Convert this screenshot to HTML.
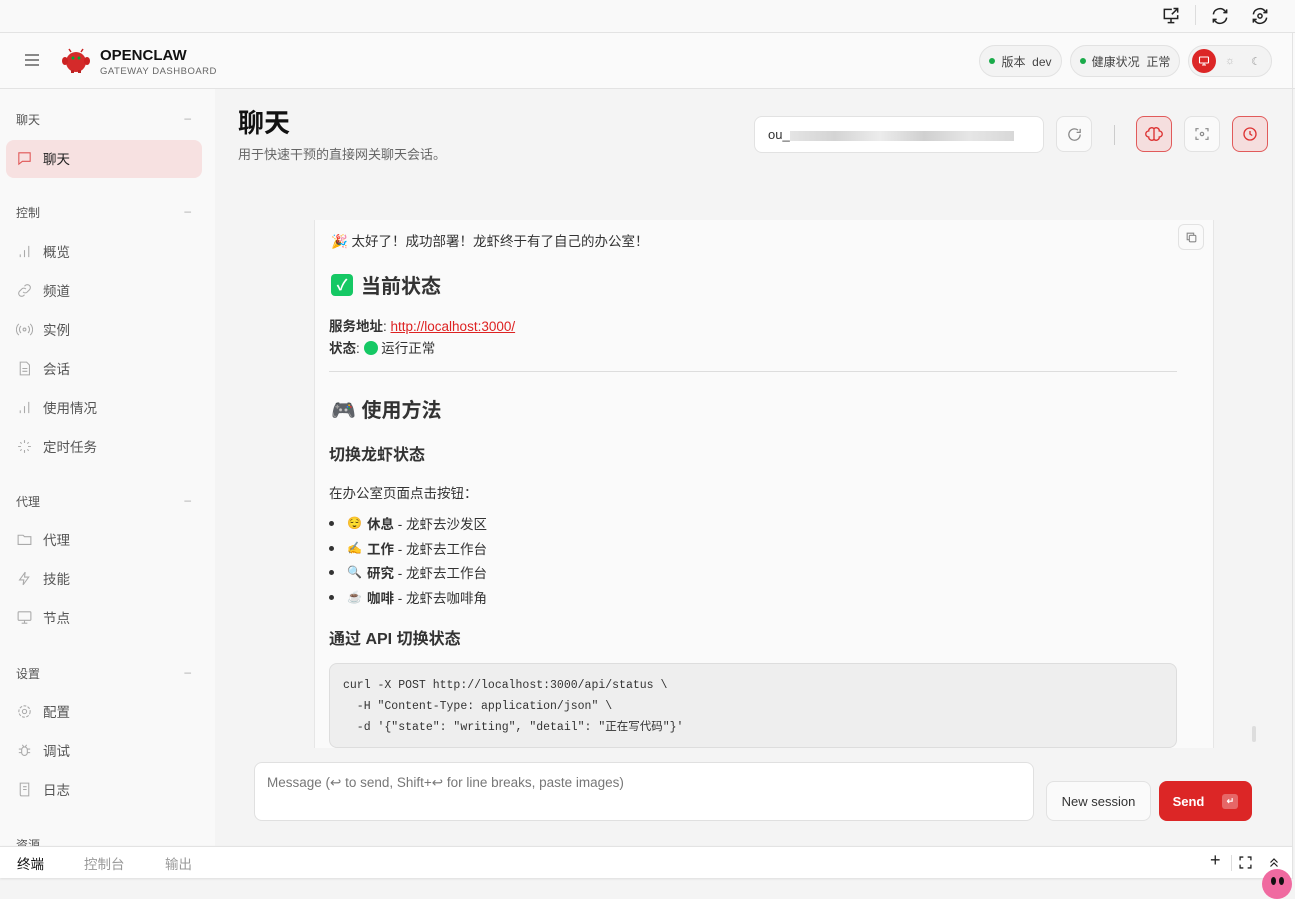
<!DOCTYPE html>
<html><head><meta charset="utf-8"><style>
*{box-sizing:border-box;margin:0;padding:0}
body{width:1295px;height:889px;overflow:hidden;background:#f4f4f4;font-family:"Liberation Sans","Noto Sans CJK SC",sans-serif;color:#333;position:relative}
.abs{position:absolute}
.top{left:0;top:0;width:1295px;height:33px;background:#f9f9f9;border-bottom:1px solid #e3e3e3}
.hdr{left:0;top:33px;width:1295px;height:56px;background:#fafafa;border-bottom:1px solid #e3e3e3}
.side{left:0;top:89px;width:215px;height:757px;background:#f9f9f9;overflow:hidden}
.sec{position:absolute;left:16px;font-size:12px;color:#555;width:175px}
.sec span{position:absolute;right:0;color:#aaa}
.item{position:absolute;left:16px;font-size:13.5px;color:#555;display:flex;align-items:center;gap:10px}
.item svg{width:17px;height:17px;stroke:#aaa;fill:none;stroke-width:1.5}
.pill{position:absolute;top:45px;height:32px;border:1px solid #e2e2e2;border-radius:16px;background:#f3f3f3;font-size:12px;color:#444;display:flex;align-items:center;justify-content:center;padding:0;gap:6px;white-space:nowrap}
.dot{width:6px;height:6px;border-radius:50%;background:#1aab4a;flex:none}
.btn{position:absolute;width:36px;height:36px;border:1px solid #e2e2e2;border-radius:8px;background:#fafafa;display:flex;align-items:center;justify-content:center}
.btn.red{background:#f5dede;border-color:#e15a5a}
.card{left:314px;top:220px;width:900px;height:528px;background:#fafafa;border-left:1px solid #e6e6e6;border-right:1px solid #e6e6e6;overflow:hidden;font-size:13.5px;color:#333}
.card b{color:#333}
.li{position:absolute;left:14px;display:flex;align-items:center;font-size:13.5px}
.li:before{content:"";width:5px;height:5px;border-radius:50%;background:#333;margin-right:13px}
.li i{font-style:normal;font-size:12px;width:20px}
.code{position:absolute;left:14px;top:443px;width:848px;height:85px;border:1px solid #ddd;border-radius:8px;background:#eeeeee;font-family:"Liberation Mono","Noto Sans CJK SC",monospace;font-size:11.5px;line-height:21px;padding:11px 13px;white-space:pre;color:#333}
</style></head><body>
<div class="abs top">
 <svg class="abs" style="left:1161px;top:6px" width="20" height="20" viewBox="0 0 24 24" fill="none" stroke="#222" stroke-width="1.8"><path d="M13 4H4v11h16v-4M8 20h8M12 15v5M15 3h5v5M20 3l-7 7"/></svg>
 <div class="abs" style="left:1195px;top:5px;width:1px;height:20px;background:#ddd"></div>
 <svg class="abs" style="left:1210px;top:6px" width="20" height="20" viewBox="0 0 24 24" fill="none" stroke="#222" stroke-width="1.8"><path d="M4 10a8 8 0 0 1 14-4l2 2M20 4v4h-4M20 14a8 8 0 0 1-14 4l-2-2M4 20v-4h4"/></svg>
 <svg class="abs" style="left:1250px;top:6px" width="20" height="20" viewBox="0 0 24 24" fill="none" stroke="#222" stroke-width="1.8"><path d="M4 10a8 8 0 0 1 14-4l2 2M20 4v4h-4M20 14a8 8 0 0 1-14 4l-2-2M4 20v-4h4"/><circle cx="12" cy="12" r="2.5"/></svg>
</div>
<div class="abs hdr">
 <div class="abs" style="left:25px;top:21px;width:14px;height:2px;background:#888;box-shadow:0 5px 0 #888,0 10px 0 #888"></div>
 <svg class="abs" style="left:61px;top:12px" width="30" height="30" viewBox="0 0 30 30"><ellipse cx="15" cy="17" rx="10" ry="10" fill="#d42a2a"/><ellipse cx="4" cy="16" rx="3" ry="4" fill="#c22"/><ellipse cx="26" cy="16" rx="3" ry="4" fill="#c22"/><path d="M10 7l-2-3M20 7l2-3" stroke="#c22" stroke-width="1.5"/><circle cx="12" cy="13" r="1.5" fill="#0a3"/><circle cx="18" cy="13" r="1.5" fill="#0a3"/><rect x="10" y="25" width="3" height="3" fill="#b22"/><rect x="17" y="25" width="3" height="3" fill="#b22"/></svg>
 <div class="abs" style="left:100px;top:14px;font-size:15px;font-weight:bold;color:#111">OPENCLAW</div>
 <div class="abs" style="left:100px;top:33px;font-size:9.5px;color:#666;letter-spacing:.5px">GATEWAY DASHBOARD</div>
 <div class="pill" style="left:979px;top:12px;width:83px"><i class="dot"></i><span>版本&nbsp; dev</span></div>
 <div class="pill" style="left:1070px;top:12px;width:110px"><i class="dot"></i><span>健康状况&nbsp; 正常</span></div>
 <div class="pill" style="left:1188px;top:12px;width:84px;padding:0 3px;gap:0;justify-content:flex-start">
  <div style="width:24px;height:24px;border-radius:50%;background:#dc2626;display:flex;align-items:center;justify-content:center"><svg width="12" height="12" viewBox="0 0 24 24" fill="none" stroke="#fff" stroke-width="2.2"><rect x="3" y="4" width="18" height="12" rx="1"/><path d="M8 20h8M12 16v4"/></svg></div>
  <div style="width:28px;text-align:center;color:#bbb;font-size:11px">☼</div>
  <div style="width:24px;text-align:center;color:#999;font-size:11px">☾</div>
 </div>
</div>
<div class="abs side">
 <div class="sec" style="top:22px">聊天<span>–</span></div>
 <div class="abs" style="left:6px;top:51px;width:196px;height:38px;background:#f7e1e1;border-radius:8px"></div>
 <div class="item" style="top:59px;color:#222"><svg viewBox="0 0 24 24" style="stroke:#e05555"><path d="M4 4h16v12H9l-5 4z"/></svg>聊天</div>
 <div class="sec" style="top:115px">控制<span>–</span></div>
 <div class="item" style="top:152px"><svg viewBox="0 0 24 24"><path d="M6 20v-4M12 20V10M18 20V4"/></svg>概览</div>
 <div class="item" style="top:191px"><svg viewBox="0 0 24 24"><path d="M10 14a4 4 0 0 0 6 0l3-3a4 4 0 0 0-6-6l-1 1M14 10a4 4 0 0 0-6 0l-3 3a4 4 0 0 0 6 6l1-1"/></svg>频道</div>
 <div class="item" style="top:230px"><svg viewBox="0 0 24 24"><circle cx="12" cy="12" r="2"/><path d="M7 7a7 7 0 0 0 0 10M17 7a7 7 0 0 1 0 10M4 4a11 11 0 0 0 0 16M20 4a11 11 0 0 1 0 16"/></svg>实例</div>
 <div class="item" style="top:269px"><svg viewBox="0 0 24 24"><path d="M6 3h9l4 4v14H6zM9 12h7M9 16h7"/></svg>会话</div>
 <div class="item" style="top:308px"><svg viewBox="0 0 24 24"><path d="M6 20v-4M12 20V10M18 20V4"/></svg>使用情况</div>
 <div class="item" style="top:347px"><svg viewBox="0 0 24 24"><path d="M12 3v4M12 17v4M3 12h4M17 12h4M6 6l2 2M16 16l2 2M6 18l2-2M16 8l2-2"/></svg>定时任务</div>
 <div class="sec" style="top:404px">代理<span>–</span></div>
 <div class="item" style="top:440px"><svg viewBox="0 0 24 24"><path d="M3 6h7l2 2h9v11H3z"/></svg>代理</div>
 <div class="item" style="top:479px"><svg viewBox="0 0 24 24"><path d="M13 3L5 14h6l-1 7 8-11h-6z"/></svg>技能</div>
 <div class="item" style="top:518px"><svg viewBox="0 0 24 24"><rect x="3" y="4" width="18" height="12" rx="1"/><path d="M8 20h8M12 16v4"/></svg>节点</div>
 <div class="sec" style="top:576px">设置<span>–</span></div>
 <div class="item" style="top:612px"><svg viewBox="0 0 24 24"><circle cx="12" cy="12" r="3"/><circle cx="12" cy="12" r="8" stroke-dasharray="4 2"/></svg>配置</div>
 <div class="item" style="top:651px"><svg viewBox="0 0 24 24"><rect x="8" y="7" width="8" height="12" rx="4"/><path d="M4 10h4M16 10h4M4 15h4M16 15h4M9 4l2 3M15 4l-2 3"/></svg>调试</div>
 <div class="item" style="top:690px"><svg viewBox="0 0 24 24"><path d="M6 3h12v18H8a2 2 0 0 1-2-2zM10 8h5M10 12h5"/></svg>日志</div>
 <div class="sec" style="top:747px">资源</div>
</div>
<div class="abs" style="left:238px;top:103px;font-size:26px;font-weight:bold;color:#111">聊天</div>
<div class="abs" style="left:238px;top:144px;font-size:13px;color:#666">用于快速干预的直接网关聊天会话。</div>
<div class="abs" style="left:754px;top:116px;width:290px;height:37px;border:1px solid #e2e2e2;border-radius:8px;background:#fff;padding:10px 13px;font-size:13px;color:#333">ou_<span style="display:inline-block;width:224px;height:10px;background:linear-gradient(90deg,#e4e4e4,#d4d4d4,#ececec,#d0d0d0,#e6e6e6,#d8d8d8);vertical-align:middle"></span></div>
<div class="btn" style="left:1056px;top:116px"><svg width="17" height="17" viewBox="0 0 24 24" fill="none" stroke="#888" stroke-width="1.8"><path d="M20 12a8 8 0 1 1-3-6.2M20 4v5h-5"/></svg></div>
<div class="abs" style="left:1114px;top:125px;width:1px;height:20px;background:#ccc"></div>
<div class="btn red" style="left:1136px;top:116px"><svg width="18" height="18" viewBox="0 0 24 24" fill="none" stroke="#d33" stroke-width="1.8"><path d="M12 4v16M12 5a4 4 0 0 0-7 3 4 4 0 0 0 0 8 4 4 0 0 0 7 3M12 5a4 4 0 0 1 7 3 4 4 0 0 1 0 8 4 4 0 0 1-7 3"/></svg></div>
<div class="btn" style="left:1184px;top:116px"><svg width="16" height="16" viewBox="0 0 24 24" fill="none" stroke="#888" stroke-width="1.8"><path d="M3 8V4h4M17 4h4v4M21 16v4h-4M7 20H3v-4"/><circle cx="12" cy="12" r="2.5"/></svg></div>
<div class="btn red" style="left:1232px;top:116px"><svg width="18" height="18" viewBox="0 0 24 24" fill="none" stroke="#d33" stroke-width="1.8"><circle cx="12" cy="12" r="8"/><path d="M12 8v4l3 2"/></svg></div>
<div class="abs card">
 <div class="abs" style="left:863px;top:4px;width:26px;height:26px;border:1px solid #e2e2e2;border-radius:6px;display:flex;align-items:center;justify-content:center"><svg width="13" height="13" viewBox="0 0 24 24" fill="none" stroke="#888" stroke-width="2"><rect x="8" y="8" width="12" height="12" rx="2"/><path d="M16 8V4H4v12h4"/></svg></div>
 <div class="abs" style="left:16px;top:10px">🎉 太好了！成功部署！龙虾终于有了自己的办公室！</div>
 <div class="abs" style="left:16px;top:50px;font-size:20px;font-weight:bold;display:flex;align-items:center;gap:8px"><span style="width:22px;height:22px;background:#15c864;border-radius:4px;color:#fff;font-size:15px;display:flex;align-items:center;justify-content:center">✓</span>当前状态</div>
 <div class="abs" style="left:14px;top:96px;line-height:22px"><b>服务地址</b>: <span style="color:#d22;text-decoration:underline">http://localhost:3000/</span><br><b>状态</b>: <span style="display:inline-block;width:14px;height:14px;border-radius:50%;background:#15c864;vertical-align:-2px"></span> 运行正常</div>
 <div class="abs" style="left:14px;top:151px;width:848px;height:1px;background:#ddd"></div>
 <div class="abs" style="left:16px;top:174px;font-size:20px;font-weight:bold">🎮 使用方法</div>
 <div class="abs" style="left:14px;top:221px;font-size:16px;font-weight:bold">切换龙虾状态</div>
 <div class="abs" style="left:14px;top:262px">在办公室页面点击按钮：</div>
 <div class="li" style="top:293px"><i>😌</i><b>休息</b>&nbsp;- 龙虾去沙发区</div>
 <div class="li" style="top:318px"><i>✍️</i><b>工作</b>&nbsp;- 龙虾去工作台</div>
 <div class="li" style="top:342px"><i>🔍</i><b>研究</b>&nbsp;- 龙虾去工作台</div>
 <div class="li" style="top:367px"><i>☕</i><b>咖啡</b>&nbsp;- 龙虾去咖啡角</div>
 <div class="abs" style="left:14px;top:405px;font-size:16px;font-weight:bold">通过 API 切换状态</div>
 <div class="code">curl -X POST http://localhost:3000/api/status \
  -H "Content-Type: application/json" \
  -d '{"state": "writing", "detail": "正在写代码"}'</div>
</div>
<div class="abs" style="left:1252px;top:726px;width:4px;height:16px;background:#ddd;border-radius:2px"></div>
<div class="abs" style="left:254px;top:762px;width:780px;height:59px;border:1px solid #e0e0e0;border-radius:8px;background:#fff;padding:12px 12px;font-size:13.5px;color:#777">Message (↩ to send, Shift+↩ for line breaks, paste images)</div>
<div class="abs" style="left:1046px;top:781px;width:105px;height:40px;border:1px solid #e2e2e2;border-radius:8px;background:#fafafa;font-size:13px;color:#333;display:flex;align-items:center;justify-content:center">New session</div>
<div class="abs" style="left:1159px;top:781px;width:93px;height:40px;border-radius:8px;background:#dc2626;font-size:13px;font-weight:bold;color:#fff;display:flex;align-items:center;justify-content:center;gap:18px">Send<span style="width:16px;height:15px;background:rgba(255,255,255,.3);border-radius:3px;font-size:9px;display:flex;align-items:center;justify-content:center">↵</span></div>
<div class="abs" style="left:0;top:846px;width:1292px;height:32px;background:#fff;border-top:1px solid #e3e3e3;box-shadow:0 1px 2px #ddd">
 <div class="abs" style="left:17px;top:6px;font-size:13.5px;color:#111">终端</div>
 <div class="abs" style="left:84px;top:6px;font-size:13.5px;color:#999">控制台</div>
 <div class="abs" style="left:165px;top:6px;font-size:13.5px;color:#999">输出</div>
 <div class="abs" style="left:1210px;top:3px;font-size:18px;color:#222">+</div>
 <div class="abs" style="left:1231px;top:8px;width:1px;height:16px;background:#ddd"></div>
 <svg class="abs" style="left:1239px;top:9px" width="13" height="13" viewBox="0 0 24 24" fill="none" stroke="#222" stroke-width="2.4"><path d="M2 8V2h6M16 2h6v6M22 16v6h-6M8 22H2v-6"/></svg>
 <svg class="abs" style="left:1268px;top:9px" width="12" height="13" viewBox="0 0 24 24" fill="none" stroke="#222" stroke-width="2.4"><path d="M5 12l7-7 7 7M5 20l7-7 7 7"/></svg>
</div>
<div class="abs" style="left:1262px;top:869px;width:30px;height:30px;border-radius:50%;background:#f06aa0"><i style="position:absolute;left:9px;top:8px;width:5px;height:8px;background:#111;border-radius:50%"></i><i style="position:absolute;left:17px;top:8px;width:5px;height:8px;background:#111;border-radius:50%"></i></div>
<div class="abs" style="left:1292px;top:33px;width:1px;height:846px;background:#e3e3e3"></div>
</body></html>
